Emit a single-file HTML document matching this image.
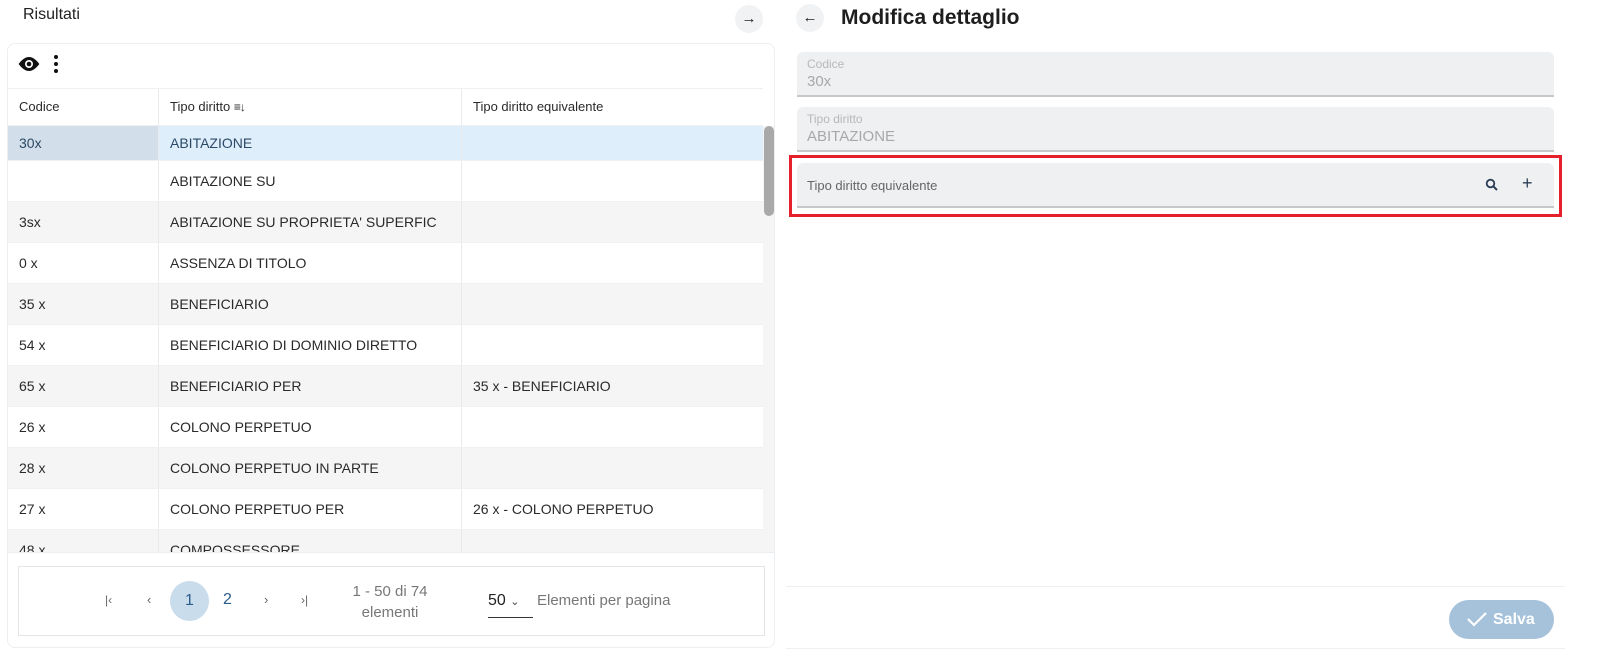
<!DOCTYPE html>
<html><head><meta charset="utf-8"><style>
*{box-sizing:border-box;margin:0;padding:0}
body{width:1599px;height:664px;background:#fff;font-family:"Liberation Sans",Roboto,sans-serif;color:#222;position:relative;overflow:hidden}
.abs{position:absolute}
.card{left:7px;top:43px;width:768px;height:605px;border:1px solid #eceff2;border-radius:8px;overflow:hidden}
.row{position:absolute;left:0;width:755px;height:41px;font-size:14px;color:#2a2a2a;border-bottom:1px solid #eef0f2}
.row div{position:absolute;top:0;height:100%;line-height:41px;border-right:1px solid #e8eaed;padding-left:11px;white-space:nowrap;overflow:hidden}
.c1{left:0;width:151px}.c2{left:151px;width:303px}.c3{left:454px;width:301px;border-right:none!important}
.g{background:#f5f5f5}
.field{left:797px;width:757px;height:45px;background:#eef0f2;border-radius:6px 6px 0 0;border-bottom:2px solid #c6c8ca}
.lab{position:absolute;left:10px;top:5px;font-size:12px;color:#b8b8b8}
.val{position:absolute;left:10px;top:21px;font-size:15px;color:#a8a8a8}
</style></head><body>
<div class="abs" style="left:23px;top:6px;font-size:16px;color:#222">Risultati</div>
<div class="abs" style="left:735px;top:5px;width:28px;height:28px;border-radius:50%;background:#f1f2f4;text-align:center;line-height:27px;font-size:15px">→</div>
<div class="abs card">
 <svg class="abs" style="left:9px;top:12px" width="24" height="16" viewBox="0 0 24 16"><path d="M12 1C6 1 2 8 1.5 8 2 8 6 15 12 15s10-7 10.5-7C22 8 18 1 12 1z" fill="#111"/><circle cx="12" cy="8" r="4" fill="#fff"/><circle cx="12" cy="8" r="2.3" fill="#111"/></svg>
 <div class="abs" style="left:46px;top:11px;width:4px;height:18px"><div style="width:4px;height:4px;border-radius:50%;background:#111;margin-bottom:3px"></div><div style="width:4px;height:4px;border-radius:50%;background:#111;margin-bottom:3px"></div><div style="width:4px;height:4px;border-radius:50%;background:#111"></div></div>
 <div class="row" style="top:44px;height:38px;font-size:13px;border-top:1px solid #eef0f2"><div class="c1" style="line-height:36px">Codice</div><div class="c2" style="line-height:36px">Tipo diritto <span style="font-size:12px;letter-spacing:-1px">≡↓</span></div><div class="c3" style="line-height:36px">Tipo diritto equivalente</div></div>
 <div class="row" style="top:82px;height:35px;background:#deeefb;color:#2b4a66"><div class="c1" style="background:#d2dfea;line-height:35px">30x</div><div class="c2" style="line-height:35px">ABITAZIONE</div><div class="c3"></div></div>
 <div class="row" style="top:117px"><div class="c1"></div><div class="c2">ABITAZIONE SU</div><div class="c3"></div></div>
 <div class="row g" style="top:158px"><div class="c1">3sx</div><div class="c2">ABITAZIONE SU PROPRIETA' SUPERFIC</div><div class="c3"></div></div>
 <div class="row" style="top:199px"><div class="c1">0 x</div><div class="c2">ASSENZA DI TITOLO</div><div class="c3"></div></div>
 <div class="row g" style="top:240px"><div class="c1">35 x</div><div class="c2">BENEFICIARIO</div><div class="c3"></div></div>
 <div class="row" style="top:281px"><div class="c1">54 x</div><div class="c2">BENEFICIARIO DI DOMINIO DIRETTO</div><div class="c3"></div></div>
 <div class="row g" style="top:322px"><div class="c1">65 x</div><div class="c2">BENEFICIARIO PER</div><div class="c3">35 x - BENEFICIARIO</div></div>
 <div class="row" style="top:363px"><div class="c1">26 x</div><div class="c2">COLONO PERPETUO</div><div class="c3"></div></div>
 <div class="row g" style="top:404px"><div class="c1">28 x</div><div class="c2">COLONO PERPETUO IN PARTE</div><div class="c3"></div></div>
 <div class="row" style="top:445px"><div class="c1">27 x</div><div class="c2">COLONO PERPETUO PER</div><div class="c3">26 x - COLONO PERPETUO</div></div>
 <div class="row g" style="top:486px"><div class="c1">48 x</div><div class="c2">COMPOSSESSORE</div><div class="c3"></div></div>
 <div class="abs" style="left:755px;top:82px;width:12px;height:430px;background:#f5f5f5"></div>
 <div class="abs" style="left:756px;top:82px;width:10px;height:90px;background:#a9a9a9;border-radius:5px"></div>
 <div class="abs" style="left:0;top:508px;width:768px;height:97px;background:#fff;border-top:1px solid #eceff2"></div>
 <div class="abs" style="left:10px;top:522px;width:747px;height:70px;border:1px solid #e3e5e8"></div>
 <div class="abs" style="left:97px;top:549px;font-size:12px;color:#666">|‹</div>
 <div class="abs" style="left:139px;top:548px;font-size:13px;color:#666">‹</div>
 <div class="abs" style="left:162px;top:537px;width:39px;height:40px;border-radius:50%;background:#c8dcec;text-align:center;line-height:40px;font-size:16px;color:#2a5c8c">1</div>
 <div class="abs" style="left:215px;top:547px;font-size:16px;color:#2a5c8c">2</div>
 <div class="abs" style="left:256px;top:548px;font-size:13px;color:#666">›</div>
 <div class="abs" style="left:293px;top:549px;font-size:12px;color:#666">›|</div>
 <div class="abs" style="left:340px;top:537px;width:84px;text-align:center;font-size:15px;color:#777;line-height:21px">1 - 50 di 74<br>elementi</div>
 <div class="abs" style="left:480px;top:548px;font-size:16px;color:#222">50 <span style="font-size:11px;color:#444">⌄</span></div>
 <div class="abs" style="left:480px;top:573px;width:45px;height:1px;background:#333"></div>
 <div class="abs" style="left:529px;top:548px;font-size:15px;color:#777">Elementi per pagina</div>
</div>
<div class="abs" style="left:796px;top:4px;width:28px;height:28px;border-radius:50%;background:#f1f2f4;text-align:center;line-height:27px;font-size:15px">←</div>
<div class="abs" style="left:841px;top:6px;font-size:21px;font-weight:bold;color:#1e1e1e">Modifica dettaglio</div>
<div class="abs field" style="top:52px"><div class="lab">Codice</div><div class="val">30x</div></div>
<div class="abs field" style="top:107px"><div class="lab">Tipo diritto</div><div class="val">ABITAZIONE</div></div>
<div class="abs field" style="top:163px"><div class="lab" style="top:15px;font-size:13px;color:#666">Tipo diritto equivalente</div>
 <svg class="abs" style="left:688px;top:15px" width="14" height="14" viewBox="0 0 14 14"><circle cx="5.5" cy="5.5" r="3.8" fill="none" stroke="#2a3e55" stroke-width="1.8"/><path d="M8.3 8.3L12 12" stroke="#2a3e55" stroke-width="2"/></svg>
 <div class="abs" style="left:725px;top:10px;font-size:18px;color:#2a3e55">+</div>
</div>
<div class="abs" style="left:789px;top:155px;width:773px;height:62px;border:3px solid #e5202a"></div>
<div class="abs" style="left:786px;top:586px;width:779px;height:1px;background:#eeeff1"></div>
<div class="abs" style="left:1449px;top:600px;width:105px;height:39px;border-radius:20px;background:#a6c2db;color:#fff;font-size:16px;font-weight:bold;line-height:39px;padding-left:44px">Salva</div>
<svg class="abs" style="left:1466px;top:610px" width="22" height="18" viewBox="0 0 22 18"><path d="M2 9l6 6L20 3" fill="none" stroke="#fff" stroke-width="2.2"/></svg>
<div class="abs" style="left:786px;top:648px;width:779px;height:1px;background:#eeeff1"></div>
</body></html>
